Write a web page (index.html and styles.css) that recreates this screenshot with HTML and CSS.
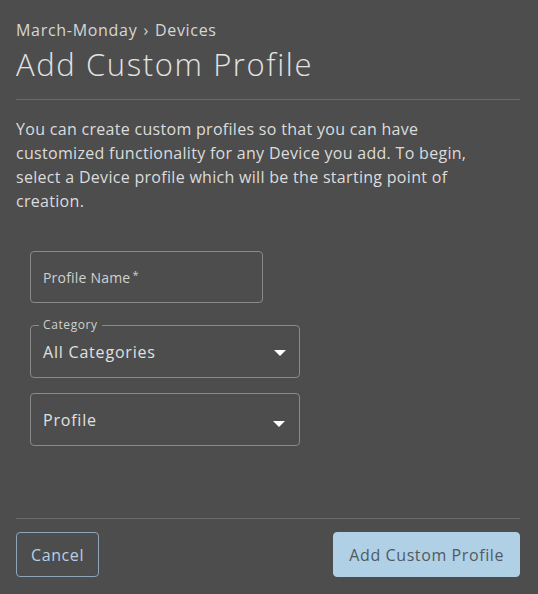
FILE: index.html
```html
<!DOCTYPE html>
<html lang="en">
<head>
<meta charset="utf-8">
<title>Add Custom Profile</title>
<link rel="stylesheet" href="styles.css">
</head>
<body>
<div class="page">
  <header class="header">
    <nav class="breadcrumb"><span>March-Monday</span><span class="sep">›</span><span>Devices</span></nav>
    <h1 class="title">Add Custom Profile</h1>
  </header>
  <div class="body">
    <p class="intro">You can create custom profiles so that you can have customized functionality for any Device you add. To begin, select a Device profile which will be the starting point of creation.</p>
    <form class="form">
      <div class="field field-text">
        <span class="placeholder">Profile Name<sup class="req">*</sup></span>
      </div>
      <div class="field field-select">
        <span class="legend">Category</span>
        <span class="value">All Categories</span>
        <span class="caret"></span>
      </div>
      <div class="field field-select">
        <span class="value">Profile</span>
        <span class="caret caret-low"></span>
      </div>
    </form>
  </div>
  <footer class="footer">
    <button type="button" class="btn btn-outline">Cancel</button>
    <button type="button" class="btn btn-primary">Add Custom Profile</button>
  </footer>
</div>
</body>
</html>
```
FILE: styles.css
```css
* { box-sizing: border-box; }
html, body { margin: 0; padding: 0; }
body {
  background: #4d4d4d;
  color: #dcdcdc;
  font-family: "Open Sans", "Liberation Sans", sans-serif;
  width: 538px;
  height: 594px;
  overflow: hidden;
}
.page {
  height: 594px;
  padding: 0 18px 0 16px;
  display: flex;
  flex-direction: column;
}
.header {
  padding-top: 19px;
  padding-bottom: 16px;
  border-bottom: 1px solid #696969;
}
.breadcrumb {
  font-size: 16px;
  line-height: 22px;
  letter-spacing: 0.7px;
  color: #d6d6d6;
  display: flex;
  gap: 6px;
}
.title {
  margin: 5px 0 0;
  font-size: 31px;
  font-weight: 300;
  line-height: 37px;
  letter-spacing: 1.6px;
  color: #e2e2e2;
}
.body { flex: 1; }
.intro {
  margin: 17px 0 0;
  max-width: 490px;
  font-size: 16px;
  line-height: 24px;
  letter-spacing: 0.3px;
  color: #dcdcdc;
}
.form {
  margin-top: 38px;
  padding-left: 14px;
  display: flex;
  flex-direction: column;
  gap: 22px;
}
.field {
  position: relative;
  height: 53px;
  border: 1px solid #8a8a8a;
  border-radius: 4px;
  display: flex;
  align-items: center;
  padding: 0 12px;
}
.field-text { width: 233px; height: 52px; }
.field-select { width: 270px; }
.field-select + .field-select { margin-top: -7px; }
.placeholder {
  font-size: 14px;
  letter-spacing: 0.2px;
  color: #d0d0d0;
}
.req { font-size: 11px; vertical-align: 4px; margin-left: 2px; }
.legend {
  position: absolute;
  top: -8px;
  left: 8px;
  padding: 0 4px;
  background: #4d4d4d;
  font-size: 12px;
  line-height: 14px;
  letter-spacing: 0.6px;
  color: #d0d0d0;
}
.value {
  font-size: 16px;
  letter-spacing: 0.8px;
  color: #e0e0e0;
}
.caret {
  position: absolute;
  right: 13px;
  top: 24px;
  width: 0;
  height: 0;
  border-left: 6px solid transparent;
  border-right: 6px solid transparent;
  border-top: 6px solid #ffffff;
}
.caret-low { top: 27px; right: 14px; }
.footer {
  border-top: 1px solid #696969;
  padding: 13px 0 17px;
  display: flex;
  justify-content: space-between;
}
.btn {
  height: 45px;
  border-radius: 4px;
  font-family: inherit;
  font-size: 16px;
  letter-spacing: 0.6px;
  padding: 0 15px;
  cursor: pointer;
}
.btn-outline {
  padding: 0 14px;
  background: transparent;
  border: 1px solid #8fa5b8;
  color: #b6d0e4;
}
.btn-primary {
  background: #b0d0e6;
  border: 1px solid #b0d0e6;
  color: #505a62;
}
```
